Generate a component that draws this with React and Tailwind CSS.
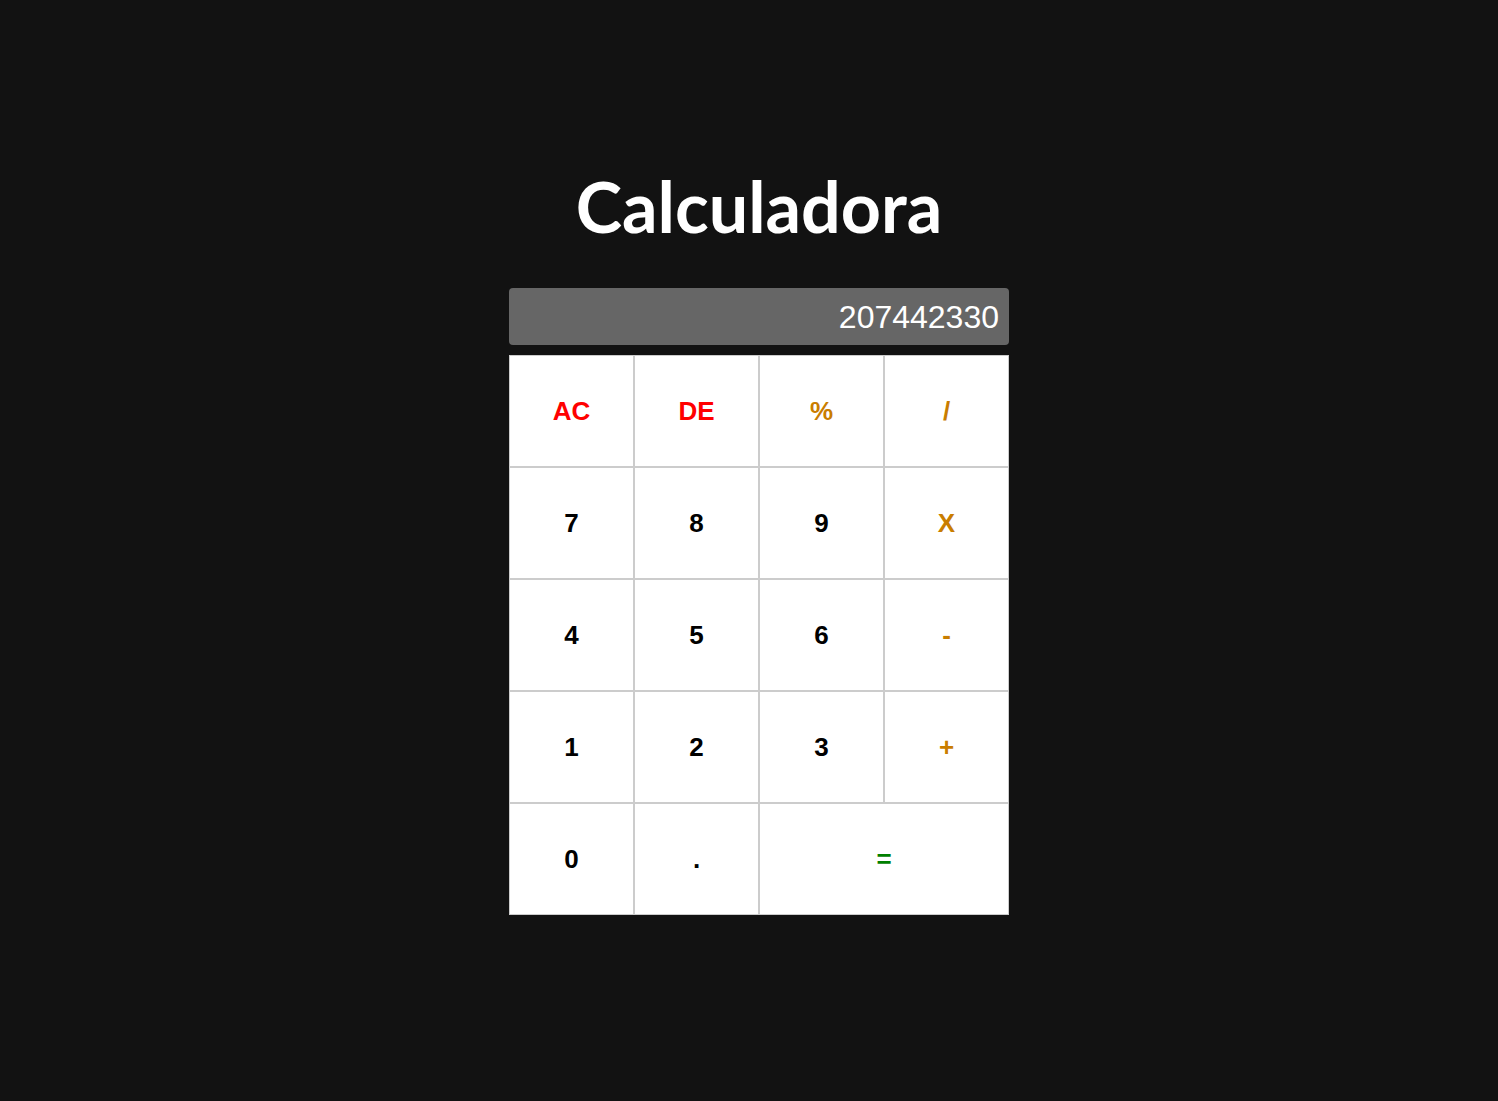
import { useState } from "react"

const keys = [
  { label: "AC", kind: "clear" },
  { label: "DE", kind: "clear" },
  { label: "%", kind: "op" },
  { label: "/", kind: "op" },
  { label: "7" },
  { label: "8" },
  { label: "9" },
  { label: "X", kind: "op" },
  { label: "4" },
  { label: "5" },
  { label: "6" },
  { label: "-", kind: "op" },
  { label: "1" },
  { label: "2" },
  { label: "3" },
  { label: "+", kind: "op" },
  { label: "0" },
  { label: "." },
  { label: "=", kind: "equal" },
]

export default function App() {
  const [value] = useState("207442330")

  return (
    <div className="min-h-screen w-full bg-[#121212] pl-[20px] flex flex-col items-center">
      <h1 className="mt-[166px] text-[70px] leading-[80px] font-bold text-white font-['Lato',sans-serif]">
        Calculadora
      </h1>
      <div className="mt-[42px] w-[500px] font-['Liberation_Sans',Arial,sans-serif]">
        <div className="h-[57px] rounded-[4px] bg-[#666666] px-[10px] flex items-center justify-end text-[32px] text-white">
          {value}
        </div>
        <div className="mt-[10px] grid grid-cols-4">
          {keys.map((k) => (
            <button
              key={k.label}
              className={`h-[112px] border border-[#cccccc] bg-white text-[26px] font-bold ${
                k.kind === "clear"
                  ? "text-[#ff0000]"
                  : k.kind === "op"
                  ? "text-[#c97d00]"
                  : k.kind === "equal"
                  ? "col-span-2 text-[#008000]"
                  : "text-black"
              }`}
            >
              {k.label}
            </button>
          ))}
        </div>
      </div>
    </div>
  )
}
